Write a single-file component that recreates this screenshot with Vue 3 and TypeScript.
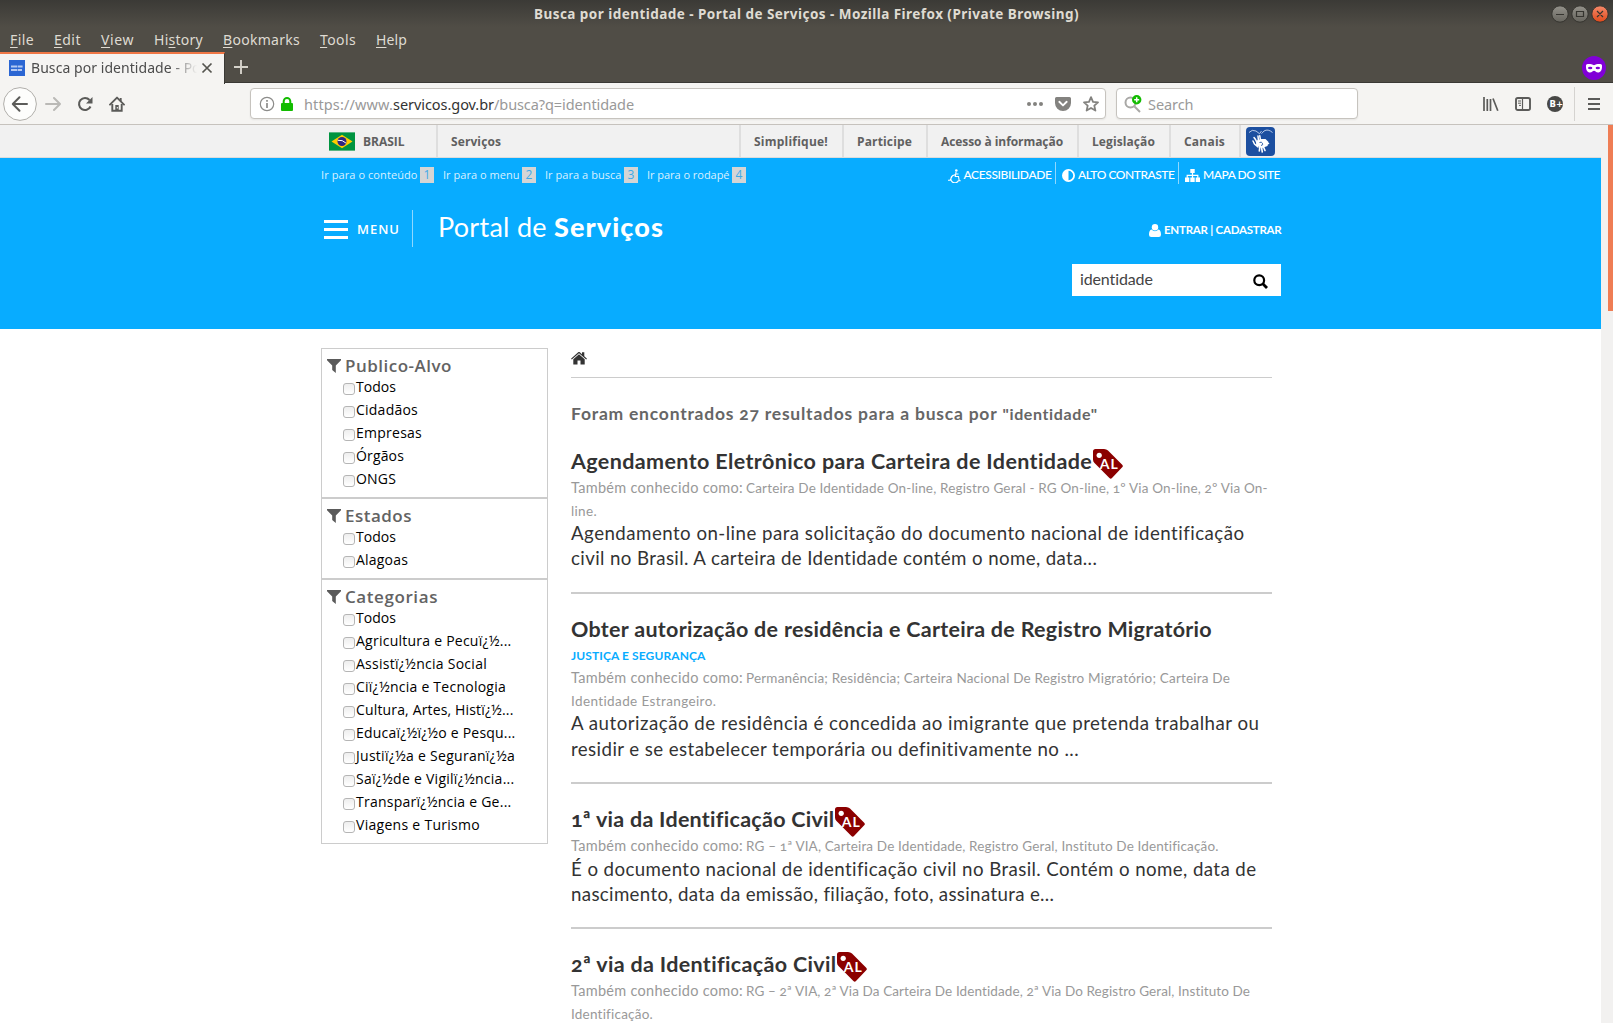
<script setup lang="ts">
interface Menu { key: string; rest: string; width: number }
interface Part { text: string; width: number; kind?: 'label' }
interface Result {
  title: string
  width: number
  tag?: string
  category?: string
  known: Part[][]
  summary: Part[]
}

// Spreads or tightens the tracking so that a run of text takes the given width.
const vFit = {
  mounted(el: HTMLElement, binding: { value: number }) {
    const count = (el.textContent ?? '').length
    const natural = el.getBoundingClientRect().width
    el.style.letterSpacing = `${(binding.value - natural) / count}px`
  },
}

const menus: Menu[] = [
  { key: 'F', rest: 'ile', width: 24 },
  { key: 'E', rest: 'dit', width: 27 },
  { key: 'V', rest: 'iew', width: 33 },
  { key: 'Hi', rest: 'tory', width: 49 },
  { key: 'B', rest: 'ookmarks', width: 77 },
  { key: 'T', rest: 'ools', width: 36 },
  { key: 'H', rest: 'elp', width: 31 },
]

const govLinks = [
  { text: 'Simplifique!', width: 74 },
  { text: 'Participe', width: 55 },
  { text: 'Acesso à informação', width: 122 },
  { text: 'Legislação', width: 63 },
  { text: 'Canais', width: 41 },
]

const skips = [
  { text: 'Ir para o conteúdo', width: 96.5 },
  { text: 'Ir para o menu', width: 76.5 },
  { text: 'Ir para a busca', width: 76.5 },
  { text: 'Ir para o rodapé', width: 82.5 },
]

const filters: { name: string; width: number; items: Part[] }[] = [
  {
    name: 'Publico-Alvo',
    width: 107,
    items: [
      { text: 'Todos', width: 40 },
      { text: 'Cidadãos', width: 62 },
      { text: 'Empresas', width: 66 },
      { text: 'Órgãos', width: 48 },
      { text: 'ONGS', width: 40 },
    ],
  },
  {
    name: 'Estados',
    width: 67,
    items: [
      { text: 'Todos', width: 40 },
      { text: 'Alagoas', width: 52 },
    ],
  },
  {
    name: 'Categorias',
    width: 93,
    items: [
      { text: 'Todos', width: 40 },
      { text: 'Agricultura e Pecuï¿½...', width: 155.5 },
      { text: 'Assistï¿½ncia Social', width: 131 },
      { text: 'Ciï¿½ncia e Tecnologia', width: 150 },
      { text: 'Cultura, Artes, Histï¿½...', width: 157.5 },
      { text: 'Educaï¿½ï¿½o e Pesqu...', width: 159.5 },
      { text: 'Justiï¿½a e Seguranï¿½a', width: 159 },
      { text: 'Saï¿½de e Vigilï¿½ncia...', width: 158.5 },
      { text: 'Transparï¿½ncia e Ge...', width: 155.5 },
      { text: 'Viagens e Turismo', width: 124 },
    ],
  },
]

const label: Part = { text: 'Também conhecido como:', width: 172, kind: 'label' }

const results: Result[] = [
  {
    title: 'Agendamento Eletrônico para Carteira de Identidade',
    width: 521.5,
    tag: 'AL',
    known: [
      [label, { text: 'Carteira De Identidade On-line, Registro Geral - RG On-line, 1º Via On-line, 2º Via On-', width: 522 }],
      [{ text: 'line.', width: 26 }],
    ],
    summary: [
      { text: 'Agendamento on-line para solicitação do documento nacional de identificação', width: 673.5 },
      { text: 'civil no Brasil. A carteira de Identidade contém o nome, data...', width: 526.5 },
    ],
  },
  {
    title: 'Obter autorização de residência e Carteira de Registro Migratório',
    width: 641,
    category: 'JUSTIÇA E SEGURANÇA',
    known: [
      [label, { text: 'Permanência; Residência; Carteira Nacional De Registro Migratório; Carteira De', width: 484 }],
      [{ text: 'Identidade Estrangeiro.', width: 145.5 }],
    ],
    summary: [
      { text: 'A autorização de residência é concedida ao imigrante que pretenda trabalhar ou', width: 688.5 },
      { text: 'residir e se estabelecer temporária ou definitivamente no ...', width: 508 },
    ],
  },
  {
    title: '1ª via da Identificação Civil',
    width: 263.5,
    tag: 'AL',
    known: [[label, { text: 'RG – 1ª VIA, Carteira De Identidade, Registro Geral, Instituto De Identificação.', width: 473 }]],
    summary: [
      { text: 'É o documento nacional de identificação civil no Brasil. Contém o nome, data de', width: 685.5 },
      { text: 'nascimento, data da emissão, filiação, foto, assinatura e...', width: 483 },
    ],
  },
  {
    title: '2ª via da Identificação Civil',
    width: 265.5,
    tag: 'AL',
    known: [
      [label, { text: 'RG – 2ª VIA, 2ª Via Da Carteira De Identidade, 2ª Via Do Registro Geral, Instituto De', width: 504.5 }],
      [{ text: 'Identificação.', width: 82 }],
    ],
    summary: [],
  },
]
</script>

<template>
  <div class="window">
    <header class="chrome">
      <div class="titlebar">
        <span v-fit="545" class="wtitle">Busca por identidade - Portal de Serviços - Mozilla Firefox (Private Browsing)</span>
        <svg class="winbtns" width="58" height="18" viewBox="0 0 58 18">
          <defs>
            <linearGradient id="wg" x1="0" y1="0" x2="0" y2="1"><stop offset="0" stop-color="#94928b" /><stop offset="1" stop-color="#66645d" /></linearGradient>
            <linearGradient id="wr" x1="0" y1="0" x2="0" y2="1"><stop offset="0" stop-color="#f58a6b" /><stop offset="1" stop-color="#e0491a" /></linearGradient>
          </defs>
          <g stroke="#35342f" stroke-width="1">
            <circle cx="9" cy="9" r="8.2" fill="url(#wg)" />
            <circle cx="29" cy="9" r="8.2" fill="url(#wg)" />
            <circle cx="49" cy="9" r="8.2" fill="url(#wr)" />
            <path d="M5 9.5h8M25.500 6.500h7v5h-7zM46 6l6 6M52 6l-6 6" fill="none" stroke-width="1.2" />
          </g>
        </svg>
      </div>
      <nav class="menubar">
        <span v-for="m in menus" :key="m.key + m.rest" v-fit="m.width" class="menu"><template v-if="m.key === 'Hi'">Hi<u>s</u></template><u v-else>{{ m.key }}</u>{{ m.rest }}</span>
      </nav>
      <div class="tabs">
        <div class="tab">
          <svg class="favicon" width="16" height="16" viewBox="0 0 16 16"><rect width="16" height="16" fill="#2b66d3" /><path d="M2 6.500h12M2 10h11" stroke="#b4c9f2" stroke-width="1.800" stroke-dasharray="6 .6 5 .4" /></svg>
          <span class="tabtext"><span v-fit="149">Busca por identidade -</span> Po</span>
          <svg class="tabx" width="12" height="12" viewBox="0 0 12 12"><path d="M1.500 1.500l9 9M10.500 1.500l-9 9" stroke="#55544f" stroke-width="1.700" /></svg>
        </div>
        <svg class="plus" width="16" height="16" viewBox="0 0 16 16"><path d="M8 1v14M1 8h14" stroke="#d5d2ca" stroke-width="1.900" /></svg>
        <svg class="mask" width="24" height="24" viewBox="0 0 24 24"><circle cx="12" cy="12" r="12" fill="#8000d7" /><path d="M4 9.500C4 7.500 9 7.600 12 9.200C15 7.600 20 7.500 20 9.500C20.300 14 18.500 16.500 16 16.500C14 16.500 13 14.800 12 14.800S10 16.500 8 16.500C5.500 16.500 3.700 14 4 9.500z" fill="#fff" /><ellipse cx="8.200" cy="12" rx="2.200" ry="1.300" fill="#8000d7" /><ellipse cx="15.800" cy="12" rx="2.200" ry="1.300" fill="#8000d7" /></svg>
      </div>
      <div class="toolbar">
        <div class="navbtns">
          <svg width="34" height="34" viewBox="0 0 34 34"><circle cx="17" cy="17" r="16.400" fill="#fdfdfc" stroke="#b0aeaa" /><path d="M24 17H10M16.500 10.300L9.800 17l6.700 6.700" fill="none" stroke="#5b5b59" stroke-width="2" stroke-linecap="round" stroke-linejoin="round" /></svg>
          <svg width="16" height="16" viewBox="0 0 16 16"><path d="M1 8h14M9 2l6 6-6 6" fill="none" stroke="#bab9b6" stroke-width="2" stroke-linecap="round" stroke-linejoin="round" /></svg>
          <svg width="16" height="16" viewBox="0 0 16 16"><path d="M13.500 10.500A6 6 0 1 1 12.500 4" fill="none" stroke="#5b5b59" stroke-width="2.100" /><path d="M15.500 1v6.500H9z" fill="#5b5b59" /></svg>
          <svg width="16" height="16" viewBox="0 0 16 16"><path d="M1 8.600L8 1.600l7 7" fill="none" stroke="#5b5b59" stroke-width="1.900" stroke-linecap="round" stroke-linejoin="round" /><path d="M3.300 8v6.700h9.400V8M11.700 2v3" fill="none" stroke="#5b5b59" stroke-width="1.900" /><path d="M6.300 9h3.400v6H6.300z" fill="#5b5b59" /><path d="M8.300 11v1.500" stroke="#fff" /></svg>
        </div>
        <div class="urlbar">
          <svg width="16" height="16" viewBox="0 0 16 16"><circle cx="8" cy="8" r="6.700" fill="none" stroke="#8c8c8a" stroke-width="1.200" /><path d="M8 4v1.800M8 7v5" stroke="#8c8c8a" stroke-width="1.700" /></svg>
          <svg class="lock" width="12" height="14" viewBox="0 0 12 14"><rect y="6" width="12" height="8" rx="1" fill="#12bc00" /><path d="M2.700 7V4.300a3.300 3.300 0 0 1 6.600 0V7" fill="none" stroke="#12bc00" stroke-width="2" /></svg>
          <span class="url"><span v-fit="89">https://www.</span><span v-fit="101" class="host">servicos.gov.br</span><span v-fit="140">/busca?q=identidade</span></span>
          <svg class="dots" width="16" height="16" viewBox="0 0 16 16" fill="#83827f"><circle cx="2" cy="8" r="2" /><circle cx="8" cy="8" r="2" /><circle cx="14" cy="8" r="2" /></svg>
          <svg class="pocket" width="16" height="16" viewBox="0 0 16 16"><path d="M1.500 1h13A1.500 1.500 0 0 1 16 2.500V7A8 8 0 0 1 0 7V2.500A1.500 1.500 0 0 1 1.500 1z" fill="#83827f" /><path d="M4.300 5.800L8 9.400l3.700-3.600" fill="none" stroke="#fff" stroke-width="1.900" stroke-linecap="round" stroke-linejoin="round" /></svg>
          <svg class="star" width="16" height="16" viewBox="0 0 16 16"><path d="M8 1.200l2 4.600 5 .5-3.700 3.300 1.100 5L8 12l-4.400 2.600 1.100-5L1 6.300l5-.5z" fill="none" stroke="#83827f" stroke-width="1.800" stroke-linejoin="round" /></svg>
        </div>
        <div class="searchbar">
          <svg width="18" height="18" viewBox="0 0 18 18"><circle cx="6.500" cy="7.500" r="5" fill="none" stroke="#a9a8a6" stroke-width="2" /><path d="M10.500 11.500L16 17" stroke="#a9a8a6" stroke-width="2" /><circle cx="12.700" cy="4.700" r="4.700" fill="#12bc00" /><path d="M12.700 2.200v5M10.200 4.700h5" stroke="#fff" stroke-width="1.500" /></svg>
          <span v-fit="45.5">Search</span>
        </div>
        <div class="tools">
          <svg width="16" height="16" viewBox="0 0 16 16"><path d="M1 1v14M4.300 3v12M7.500 3v12M10 2.500l4.800 12.200" stroke="#5b5b59" stroke-width="1.700" /></svg>
          <svg width="16" height="16" viewBox="0 0 16 16"><rect x="1" y="2" width="14" height="12" rx="1.800" fill="none" stroke="#5b5b59" stroke-width="1.900" /><path d="M7.500 2v12" stroke="#5b5b59" stroke-width="1.200" /><path d="M3 5h3M3 7.200h3M4 9.400h2" stroke="#5b5b59" stroke-width="1" /></svg>
          <svg width="16" height="16" viewBox="0 0 16 16"><circle cx="8" cy="8" r="8" fill="#484846" /><text x="2.600" y="11.400" class="bplus">B+</text></svg>
        </div>
        <i class="tsep"></i>
        <svg class="burger" width="12" height="14" viewBox="0 0 12 14"><path d="M.5 2h11M.5 7h11M.5 12h11" stroke="#5b5b59" stroke-width="2" stroke-linecap="round" /></svg>
      </div>
    </header>

    <div class="viewport">
      <div class="page">
        <div class="govbar">
          <div class="wrap gov">
            <div class="brasil">
              <svg width="26" height="19" viewBox="0 0 26 19"><rect width="26" height="19" fill="#009440" /><path d="M0 .5h26M0 18.500h26" stroke="#58b583" /><path d="M13 2.700L23.500 9.500 13 16.300 2.500 9.500z" fill="#ffcb00" /><circle cx="13" cy="9.500" r="4.500" fill="#302681" /><path d="M8.800 8.300Q13.500 7.600 16.900 11" stroke="#fff" fill="none" /></svg>
              <span v-fit="41.5">BRASIL</span>
            </div>
            <div class="gitem"><span v-fit="50">Serviços</span></div>
            <div class="gspace"></div>
            <div v-for="g in govLinks" :key="g.text" class="gitem"><span v-fit="g.width">{{ g.text }}</span></div>
            <div class="glibras">
              <svg width="29" height="29" viewBox="0 0 29 29"><rect width="29" height="29" rx="4" fill="#1c4fa0" /><path d="M3 5.500Q6 2 10 4l3.500 2.700L15.500 4M15.500 6.700L18 4q4-2.500 8.500 1.500" fill="none" stroke="#c7d6ee" stroke-width=".9" /><path d="M12 20l-3.500-3-1.500-3M11.500 17l-2-4.500-1.500-2M12.500 14l-.5-5M14.500 13.500l-.7-4.700" fill="none" stroke="#fff" stroke-width="1.500" stroke-linecap="round" /><path d="M10.500 13.500l5-1.500h4l3 3-1 4-5.500 2-6-2.500z" fill="#fff" /><path d="M18 16l4.500.5M17.500 20l1.500 3.500M15.500 20l.8 5M13.800 20l-.5 4" stroke="#fff" stroke-width="1.600" stroke-linecap="round" /><path d="M13.500 15.500q2-1 3 .8t-1.500 2.200" fill="none" stroke="#1c4fa0" stroke-width=".9" /></svg>
            </div>
          </div>
        </div>

        <div class="hero">
          <div class="wrap">
            <div class="accessrow">
              <div class="skips">
                <span v-for="(s, i) in skips" :key="s.text" class="skip"><span v-fit="s.width">{{ s.text }}</span><b>{{ i + 1 }}</b></span>
              </div>
              <div class="alinks">
                <svg width="13" height="14" viewBox="0 0 13 14"><circle cx="8.300" cy="1.500" r="1.300" fill="#fff" /><path d="M8 3l-.7 4.500h3.200l.7 4.200h1.500M8 5h2.500M5 6.300a4 4 0 1 0 5.500 5.200M0 11.200h2l2.500-4.500 3-1.200" fill="none" stroke="#fff" stroke-width="1.100" /></svg>
                <span v-fit="88" class="a1">ACESSIBILIDADE</span><i></i>
                <svg class="ct" width="13" height="13" viewBox="0 0 13 13"><circle cx="6.500" cy="6.500" r="5.600" fill="none" stroke="#fff" stroke-width="1.800" /><path d="M6.500 1a5.500 5.500 0 0 0 0 11z" fill="#fff" /></svg>
                <span v-fit="96.5" class="a1">ALTO CONTRASTE</span><i></i>
                <svg class="sm" width="15" height="13" viewBox="0 0 15 13"><path d="M5.300 0h4.400v4H5.300zM0 8.500h4.300V13H0zM5.300 8.500h4.400V13H5.300zM10.700 8.500H15V13h-4.300z" fill="#fff" /><path d="M7.500 3v6M2.200 9V6.300h10.600V9" fill="none" stroke="#fff" stroke-width="1.200" /></svg>
                <span v-fit="77" class="a1">MAPA DO SITE</span>
              </div>
            </div>
            <div class="brandrow">
              <span class="bars"><i></i><i></i><i></i></span>
              <span v-fit="43" class="menuword">MENU</span>
              <i class="vline"></i>
              <span class="brand"><span v-fit="116">Portal de&nbsp;</span><strong v-fit="110">Serviços</strong></span>
              <span class="login">
                <svg width="12" height="13" viewBox="0 0 12 13"><circle cx="6" cy="3.300" r="3.200" fill="#fff" /><path d="M2.600 5.600a4.500 4.500 0 0 0 6.800 0C11.300 6 12 8 12 10.800A2.200 2.200 0 0 1 9.800 13H2.200A2.200 2.200 0 0 1 0 10.800C0 8 .7 6 2.600 5.600z" fill="#fff" /></svg>
                <span v-fit="117.5">ENTRAR | CADASTRAR</span>
              </span>
            </div>
            <div class="query">
              <span v-fit="73">identidade</span>
              <svg width="15" height="15" viewBox="0 0 15 15"><circle cx="6.200" cy="6.200" r="4.900" fill="none" stroke="#000" stroke-width="2.200" /><path d="M9.800 9.800l4.200 4.200" stroke="#000" stroke-width="2.800" /></svg>
            </div>
          </div>
        </div>

        <div class="wrap body">
          <aside>
            <section v-for="f in filters" :key="f.name" class="panel">
              <h3><svg width="14" height="14" viewBox="0 0 14 14"><path d="M0 0h14v1.200L8.800 6.500V14L5.200 11V6.500L0 1.200z" fill="#5a5a5a" /></svg><span v-fit="f.width">{{ f.name }}</span></h3>
              <label v-for="t in f.items" :key="t.text"><i class="box"></i><span v-fit="t.width">{{ t.text }}</span></label>
            </section>
          </aside>
          <main>
            <div class="crumb"><svg width="16" height="13" viewBox="0 0 16 13"><path d="M0 7.200L8 0l3 2.700V.7h2.300v4L16 7.200l-.8.9L8 1.700.8 8.100z" fill="#333" /><path d="M2.300 7.800L8 2.800l5.700 5V13H9.500V9h-3v4H2.300z" fill="#333" /></svg></div>
            <h2><span v-fit="426.5">Foram encontrados 27 resultados para a busca por</span><em v-fit="95.5">"identidade"</em></h2>
            <article v-for="r in results" :key="r.title">
              <h1><span v-fit="r.width">{{ r.title }}</span><svg v-if="r.tag" width="30" height="30" viewBox="0 0 30 30"><path d="M0 2.500Q0 0 2.500 0H11Q13.500 0 15 1.500L29.200 15.700Q30.500 17 29.200 18.300L19 29Q17.700 30.300 16.400 29L1.500 14Q0 12.500 0 10.500z" fill="#8b0000" /><circle cx="6.200" cy="6.300" r="2.600" fill="#fff" /><text x="6.800" y="19.500" class="uf" textLength="18">{{ r.tag }}</text></svg></h1>
              <p v-if="r.category" class="known"><span v-fit="134.5" class="cat">{{ r.category }}</span></p>
              <p v-for="(line, i) in r.known" :key="i" class="known"><span v-for="p in line" :key="p.text" v-fit="p.width" :class="p.kind">{{ p.text }}</span></p>
              <div class="summary"><p v-for="p in r.summary" :key="p.text"><span v-fit="p.width">{{ p.text }}</span></p></div>
            </article>
          </main>
        </div>
      </div>
      <div class="scroll"><i></i></div>
    </div>
  </div>
</template>

<style>
body { margin: 0; background: #fff; overflow: hidden; }
</style>

<style scoped>
.window { width: 1613px; height: 1023px; overflow: hidden; display: flex; flex-direction: column; font-family: "Open Sans", sans-serif; white-space: nowrap; }
svg { display: block; flex: none; }
i { display: block; flex: none; }
.chrome { flex: none; height: 125px; background: #504d46; font-family: "Noto Sans", sans-serif; font-size: 14px; }
.titlebar { position: relative; height: 27px; display: flex; justify-content: center; background: linear-gradient(#3b3a36, #504d46); }
.wtitle { font-weight: 700; color: #dfdbd2; line-height: 28px; font-size: 13.5px; }
.winbtns { position: absolute; right: 4px; top: 5px; }
.menubar { height: 24px; padding-left: 10px; display: flex; gap: 20px; color: #dfdbd2; line-height: 26px; }
.menu u { text-underline-offset: 2px; text-decoration-thickness: 1px; }
.tabs { height: 32px; display: flex; box-shadow: inset 0 -1px #3a3935; }
.tab { box-sizing: border-box; width: 225px; height: 32px; background: #f5f4f2; border-top: 2px solid #f07746; border-right: 1px solid #3a3935; margin-top: 1px; padding-left: 9px; display: flex; align-items: flex-start; color: #4c4c4c; }
.favicon { margin-top: 6px; }
.tabtext { width: 166px; overflow: hidden; margin: 4px 4px 0 6px; line-height: 20px; -webkit-mask-image: linear-gradient(90deg, #000 140px, transparent 166px); mask-image: linear-gradient(90deg, #000 140px, transparent 166px); }
.tabx { margin-top: 8px; }
.plus { margin: 8px 0 0 8px; }
.mask { margin: 5px 7px 0 auto; }
.toolbar { height: 41px; background: #f5f4f2; border-bottom: 1px solid #c6c2bd; display: flex; align-items: center; }
.navbtns { width: 247px; padding-left: 3px; display: flex; align-items: center; }
.navbtns svg { margin-right: 16px; }
.navbtns svg:first-child { margin-right: 8px; }
.urlbar, .searchbar { box-sizing: border-box; height: 31px; background: #fff; border: 1px solid #c6c3be; border-radius: 4px; display: flex; align-items: center; box-shadow: 0 1px 2px #0001; }
.urlbar { width: 856px; padding: 0 6px 0 8px; }
.lock { margin: 0 11px 0 6px; }
.url { color: #999; display: flex; line-height: 20px; font-size: 14.5px; }
.host { color: #333; }
.dots { margin-left: auto; }
.pocket { margin: 0 12px; }
.searchbar { margin-left: 10px; width: 242px; padding-left: 7px; gap: 6px; color: #9a9a9a; font-size: 14.5px; }
.tools { margin-left: 125px; display: flex; gap: 16px; }
.bplus { font: 700 8.5px "DejaVu Sans", sans-serif; fill: #fff; }
.tsep { width: 1px; height: 34px; background: #d5d3d0; margin-left: 11px; }
.burger { margin-left: 13px; }
.viewport { flex: 1; display: flex; min-height: 0; }
.page { width: 1601px; overflow: hidden; }
.scroll { width: 12px; background: #f2f1f0; display: flex; justify-content: flex-end; }
.scroll i { width: 5px; height: 186px; background: #ef7d54; }
.wrap { width: 960px; margin: 0 0 0 321px; }
.govbar { height: 33px; box-sizing: border-box; background: #f1f1f1; border-bottom: 1px solid #dcdcdc; font-weight: 700; font-size: 12px; color: #606060; line-height: 33px; }
.gov { display: flex; height: 32px; }
.brasil { width: 107px; padding-left: 8px; display: flex; gap: 8px; }
.brasil svg { margin-top: 7px; }
.gitem { border-left: 2px solid #dedede; padding: 0 14px 0 13px; }
.gspace { flex: 1; }
.glibras { border-left: 2px solid #dedede; padding: 2px 6px 0 5px; }
.hero { height: 171px; background: #08acff; color: #fff; font-family: Lato, sans-serif; }
.hero .wrap { display: flex; flex-direction: column; }
.accessrow { height: 40px; display: flex; justify-content: space-between; font-size: 11px; }
.skips { display: flex; gap: 9px; padding-top: 9px; font-family: "Open Sans", sans-serif; line-height: 16px; color: #d8f0ff; }
.skip { display: flex; gap: 2.500px; }
.skip b { width: 14px; height: 16px; background: #d5d5d5; color: #3fa9e8; text-align: center; font-weight: 400; font-size: 12px; }
.alinks { display: flex; padding-top: 4px; margin-right: 1px; height: 22px; line-height: 25px; font-size: 12px; font-weight: 500; }
.alinks svg { margin-top: 7px; }
.alinks i { width: 1px; background: #8fd8ff; margin: 0 6px 0 3.500px; }
.a1 { margin-left: 3px; }
.brandrow { height: 66px; display: flex; align-items: flex-start; }
.bars { margin: 22px 9px 0 3px; display: grid; gap: 5px; }
.bars i { width: 24px; height: 3px; background: #fff; }
.menuword { font: 600 13px/18px "Open Sans", sans-serif; margin-top: 22px; }
.vline { width: 1px; height: 37px; margin: 12px 0 0 12px; background: #8fd8ff; }
.brand { font-size: 27px; line-height: 34px; margin: 12px 0 0 25px; display: flex; }
.brand strong { font-weight: 900; }
.login { margin-left: auto; display: flex; gap: 3px; margin-top: 22px; font-size: 11.5px; font-weight: 700; line-height: 20px; margin-right: -.5px; }
.login svg { margin-top: 4px; }
.query { box-sizing: border-box; align-self: flex-end; width: 209px; height: 32px; background: #fff; padding: 0 13px 0 8px; display: flex; justify-content: space-between; color: #444; font-size: 16px; line-height: 30px; }
.query svg { margin-top: 10px; }
.body { display: flex; padding-top: 19px; gap: 23px; }
aside { width: 227px; flex: none; }
.panel { box-sizing: border-box; border: 1px solid #ccc; padding: 4px 0 4px 5px; width: 227px; }
h3 { margin: 0; height: 25px; line-height: 25px; display: flex; gap: 4px; font-size: 17px; font-weight: 600; color: #636363; }
h3 svg { margin-top: 6px; }
.panel label { display: flex; height: 23px; line-height: 17px; font-size: 14px; color: #000; padding-left: 16px; gap: 1px; }
.box { box-sizing: border-box; width: 12px; height: 12px; border: 1px solid #b5b5b5; border-radius: 3px; margin-top: 5px; background: linear-gradient(#eee, #fff); }
main { width: 701px; font-family: Lato, sans-serif; color: #333; font-feature-settings: "onum"; }
.crumb { height: 29px; border-bottom: 1px solid #ccc; }
.crumb svg { padding-top: 3.500px; }
h2 { margin: 0; height: 48px; box-sizing: border-box; padding-top: 21px; line-height: 30px; display: flex; gap: 5px; font-size: 17.5px; font-weight: 700; color: #666; }
h2 em { font-style: normal; font-size: 16px; }
article { padding: 20px 0 20.200px; border-bottom: 2px solid #ccc; }
h1 { margin: 0; height: 31px; line-height: 30px; font-size: 21.5px; font-weight: 700; display: flex; align-items: flex-start; }
h1 svg { margin: 3px 0 0 .5px; }
.uf { font: 700 14px Lato, sans-serif; fill: #fff; }
p { margin: 0; }
.known { height: 22.500px; line-height: 22.500px; font-size: 13.5px; color: #999; display: flex; gap: 3px; }
.label { font-size: 14.5px; }
.cat { color: #08acff; font-size: 12px; font-weight: 700; }
.summary { margin-top: -1px; line-height: 25.300px; font-size: 18.700px; }
</style>
